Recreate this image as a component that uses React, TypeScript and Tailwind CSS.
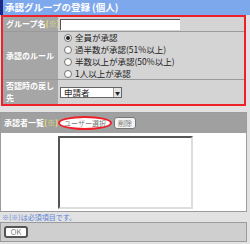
import React from "react";

const rules = [
  "全員が承認",
  "過半数が承認(51%以上)",
  "半数以上が承認(50%以上)",
  "1人以上が承認",
];

const Radio = ({ checked }: { checked?: boolean }) => (
  <span className="flex h-[8px] w-[8px] items-center justify-center rounded-full border border-[#707070] bg-white">
    {checked && <span className="h-[4px] w-[4px] rounded-full bg-[#222]" />}
  </span>
);

const Req = () => <span className="text-[#e8e070]">(※)</span>;

export default function App() {
  return (
    <div
      className="h-[244px] w-[250px] overflow-hidden bg-[#e2e2e2] text-[8.5px] leading-none"
      style={{ fontFamily: '"Noto Sans CJK JP", "Noto Sans", sans-serif' }}
    >
      {/* title */}
      <div className="h-[15px] whitespace-nowrap border-l-[3px] border-[#1c2a86] bg-[#7ea8ec] pl-[2px] text-[9.5px] font-bold leading-[15px] text-white">
        承認グループの登録 (個人)
      </div>

      {/* required block */}
      <div className="ml-[1px] w-[245px] border-2 border-[#f0202a] bg-[#d4d4d4]">
        <div className="flex h-[15px] border-b border-[#9a9a9a]">
          <div className="flex w-[55px] items-center whitespace-nowrap bg-[#a6a6a6] pl-[3px] text-[8px] font-bold text-white">
            グループ名
            <Req />
          </div>
          <div className="flex flex-1 items-center pl-[2px]">
            <div className="h-[11px] w-[120px] border-l border-t border-[#555] bg-white" />
          </div>
        </div>
        <div className="flex h-[48px] border-b border-[#9a9a9a]">
          <div className="flex w-[55px] items-center whitespace-nowrap bg-[#a6a6a6] pl-[3px] text-[8px] font-bold text-white">
            承認のルール
          </div>
          <div className="flex flex-1 flex-col justify-center gap-[3.5px] pl-[6px] text-[#222]">
            {rules.map((r, i) => (
              <div key={r} className="flex items-center gap-[3px] whitespace-nowrap">
                <Radio checked={i === 0} />
                <span>{r}</span>
              </div>
            ))}
          </div>
        </div>
        <div className="flex h-[24px]">
          <div className="flex w-[55px] items-center whitespace-nowrap bg-[#a6a6a6] pl-[3px] text-[8px] font-bold leading-[12px] text-white">
            <p>
              否認時の戻し
              <br />
              先
            </p>
          </div>
          <div className="flex flex-1 items-center pl-[2px]">
            <div className="flex h-[11px] w-[62px] items-center justify-between border border-[#666] bg-white pl-[3px] text-[#222]">
              <span>申請者</span>
              <span className="flex h-[9px] w-[8px] items-center justify-center border-l border-[#999] bg-[#e4e4e4] text-[5px] text-[#222]">
                ▼
              </span>
            </div>
          </div>
        </div>
      </div>

      {/* approvers */}
      <div className="mt-[6px] mr-[3px] border border-[#9c9c9c] bg-white">
        <div className="flex h-[20px] items-center bg-[#a0a0a0]">
          <div className="w-[57px] whitespace-nowrap pl-[3px] text-[8px] font-bold text-white">
            承認者一覧
            <Req />
          </div>
          <button className="flex h-[14px] w-[54px] items-center justify-center whitespace-nowrap rounded-[50%] border-2 border-[#f0202a] bg-white text-[7px] text-[#777]">
            ユーザー選択
          </button>
          <button className="ml-[2px] flex h-[12px] w-[22px] items-center justify-center whitespace-nowrap rounded-[3px] border border-[#777] bg-[#f4f4f4] text-[7px] text-[#777]">
            削除
          </button>
        </div>
        <div className="h-[78px] pl-[57px] pt-[3px]">
          <div className="h-[73px] w-[135px] border-2 border-l-[#555] border-t-[#555] border-r-[#ddd] border-b-[#ddd] bg-white" />
        </div>
      </div>

      <div className="h-[10px] whitespace-nowrap pl-[2px] pt-[2px] text-[7px] text-[#5a82d8]">
        ※(※)は必須項目です。
      </div>

      <div className="mr-[3px] flex h-[20px] items-center border border-[#9c9c9c] bg-[#cfcfcf] pl-[3px]">
        <button className="flex h-[12px] w-[24px] items-center justify-center rounded-[3px] border-2 border-[#555] bg-white text-[8px] text-[#888]">
          OK
        </button>
      </div>
    </div>
  );
}
